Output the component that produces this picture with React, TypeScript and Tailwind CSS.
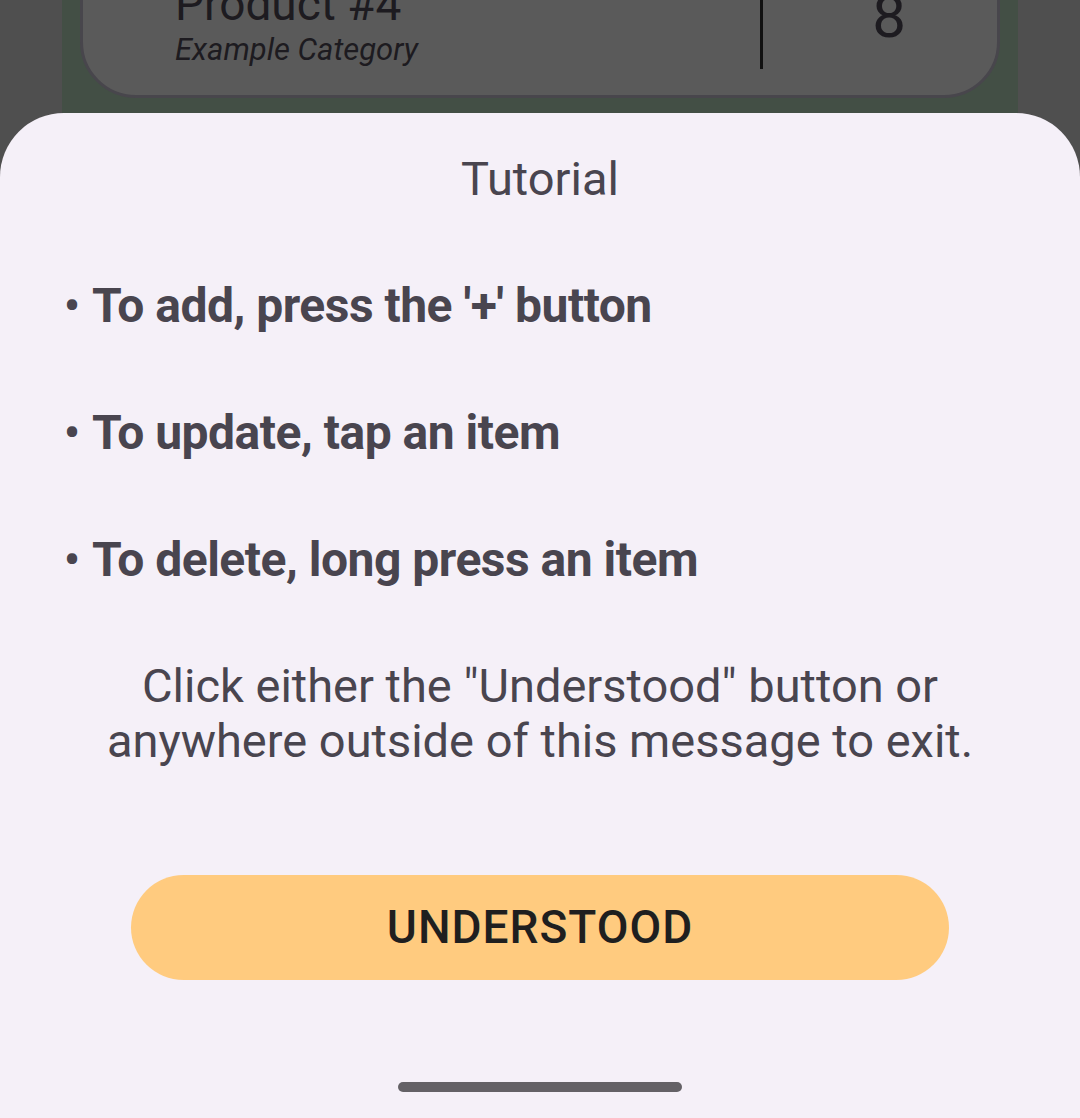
import { ReactNode } from "react"

function Bullet({ children }: { children: ReactNode }) {
  return (
    <div className="flex items-center h-[127px] text-[48px] font-bold text-[#49454f] tracking-[-0.5px]">
      <span className="w-[28px] text-[44px] leading-none">•</span>
      <span>{children}</span>
    </div>
  )
}

export default function App() {
  return (
    <div className="w-[1080px] h-[1118px] overflow-hidden bg-[#4f4f4f] flex flex-col font-['Roboto',sans-serif]">
      <div className="h-[113px] shrink-0 mx-[62px] bg-[#434f45] px-[18px]">
        <div className="-mt-[70px] h-[168px] rounded-[56px] border-[3px] border-[#48464c] bg-[#5a5a5a] flex">
          <div className="flex-1 flex flex-col justify-end pl-[92px] pb-[25px]">
            <span className="text-[46px] leading-[52px] text-[#1d1b20]">Product #4</span>
            <span className="text-[31px] leading-[40px] italic text-[#1d1b20]">Example Category</span>
          </div>
          <div className="w-[3px] bg-[#111] mb-[26px]" />
          <div className="w-[234px] flex justify-center items-end pb-[48px]">
            <span className="text-[60px] leading-none text-[#1d1b20] pl-[18px]">8</span>
          </div>
        </div>
      </div>

      <div className="flex-1 bg-[#f5f0f8] rounded-t-[64px] flex flex-col items-center">
        <div className="mt-[41px] text-[47px] leading-[50px] text-[#49454f]">Tutorial</div>

        <div className="self-stretch pl-[64px] mt-[38px] flex flex-col">
          <Bullet>To add, press the '+' button</Bullet>
          <Bullet>To update, tap an item</Bullet>
          <Bullet>To delete, long press an item</Bullet>
        </div>

        <p className="mt-[35px] text-center text-[47px] leading-[55px] text-[#49454f]">
          Click either the "Understood" button or
          <br />
          anywhere outside of this message to exit.
        </p>

        <button className="mt-[107px] w-[818px] h-[105px] rounded-full bg-[#ffcb7f] text-[46px] font-medium tracking-[1px] text-[#1f1f1f]">
          UNDERSTOOD
        </button>

        <div className="mt-auto mb-[26px] w-[284px] h-[10px] rounded-full bg-[#646166]" />
      </div>
    </div>
  )
}
